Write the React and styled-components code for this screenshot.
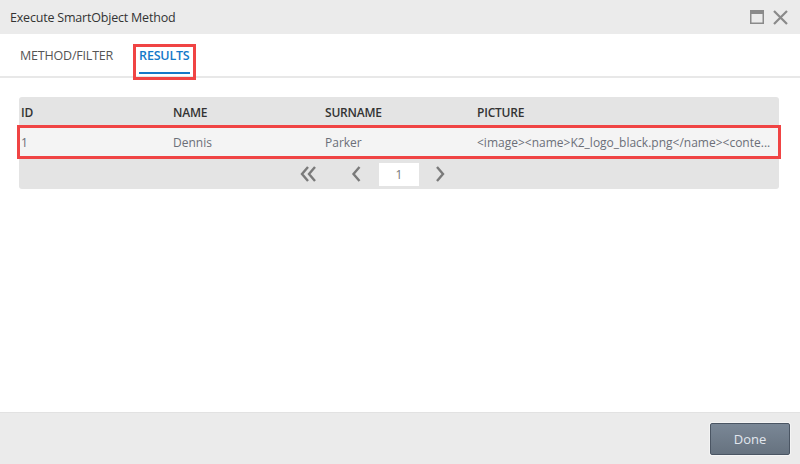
import React from 'react'
import styled, { createGlobalStyle } from 'styled-components'

const Global = createGlobalStyle`
  html, body { margin: 0; padding: 0; background: #fff; }
  body { font-family: "Open Sans", "Liberation Sans", sans-serif; }
  #root { width: 800px; height: 464px; }
`

const Dialog = styled.div`
  width: 800px;
  height: 464px;
  display: flex;
  flex-direction: column;
  background: #fff;
  overflow: hidden;
`

const TitleBar = styled.div`
  height: 34px;
  flex: none;
  background: #ebebeb;
  display: flex;
  align-items: center;
  justify-content: space-between;
  padding: 0 12px 0 10px;
`

const Title = styled.div`
  font-size: 12.5px;
  color: #333;
  letter-spacing: -0.2px;
`

const WinButtons = styled.div`
  display: flex;
  align-items: center;
  gap: 9px;
  color: #8a8a8a;
`

const Tabs = styled.div`
  height: 42px;
  flex: none;
  display: flex;
  align-items: flex-start;
  padding-left: 20px;
  gap: 26px;
  border-bottom: 2px solid #e8e8e8;
`

const Tab = styled.div`
  height: 24px;
  margin-top: 16px;
  line-height: 11px;
  font-size: 12.5px;
  letter-spacing: -0.2px;
  color: ${p => (p.$active ? '#1479c9' : '#555')};
  font-weight: ${p => (p.$active ? 600 : 400)};
  box-shadow: ${p => (p.$active ? 'inset 0 -2px 0 #1479c9' : 'none')};
  outline: ${p => (p.$highlight ? '3px solid #f04444' : 'none')};
  outline-offset: 3px;
`

const Body = styled.div`
  flex: 1;
  padding: 19px 20px 0 19px;
`

const Grid = styled.div`
  width: 760px;
  border-radius: 3px;
  background: #e4e4e4;
`

const Row = styled.div`
  display: grid;
  grid-template-columns: 152px 152px 152px 1fr;
  height: 30px;
  align-items: center;
  background: ${p => (p.$head ? 'transparent' : '#f4f4f4')};
  outline: ${p => (p.$highlight ? '3px solid #f04444' : 'none')};
  outline-offset: ${p => (p.$highlight ? '-1px' : '0')};
  position: relative;
  margin-bottom: ${p => (p.$highlight ? '2px' : '0')};
`

const Cell = styled.div`
  padding-left: 2px;
  font-size: 12px;
  color: ${p => (p.$head ? '#333' : '#6b6f78')};
  font-weight: ${p => (p.$head ? 600 : 400)};
  letter-spacing: ${p => (p.$head ? '-0.2px' : '0')};
  white-space: nowrap;
`

const Pager = styled.div`
  height: 30px;
  display: flex;
  align-items: center;
  padding-left: 279px;
  color: #7a7a7a;
`

const PagerBtn = styled.div`
  display: flex;
  align-items: center;
  justify-content: center;
  width: 20px;
  margin-left: ${p => p.$ml || 0}px;
`

const PageBox = styled.div`
  width: 40px;
  height: 23px;
  margin-left: 13px;
  background: #fff;
  display: flex;
  align-items: center;
  justify-content: center;
  font-size: 12px;
  color: #777;
`

const Footer = styled.div`
  height: 51px;
  flex: none;
  background: #ebebeb;
  border-top: 1px solid #e2e2e2;
  display: flex;
  align-items: center;
  justify-content: flex-end;
  padding-right: 10px;
`

const DoneButton = styled.button`
  width: 80px;
  height: 32px;
  border: 1px solid #4a5563;
  border-radius: 2px;
  background: linear-gradient(#7a8796, #66727f);
  box-shadow: 0 0 0 1px #f4f4f4;
  color: #e2e7ee;
  font-family: "Open Sans", "Liberation Sans", sans-serif;
  font-size: 13px;
`

const Chevron = ({ d }) => (
  <svg width="18" height="18" viewBox="0 0 18 18" fill="none" stroke="currentColor" strokeWidth="2.4">
    <path d={d} />
  </svg>
)

export default function App() {
  return (
    <>
      <Global />
      <Dialog>
        <TitleBar>
          <Title>Execute SmartObject Method</Title>
          <WinButtons>
            <svg width="14" height="14" viewBox="0 0 14 14" fill="none" stroke="#8a8a8a">
              <rect x="0.75" y="0.75" width="12.5" height="12.5" strokeWidth="1.5" />
              <rect x="0.75" y="0.75" width="12.5" height="2.5" fill="#8a8a8a" strokeWidth="1.5" />
            </svg>
            <svg width="15" height="15" viewBox="0 0 15 15" stroke="#8a8a8a" strokeWidth="2.2">
              <path d="M1 1 L14 14 M14 1 L1 14" />
            </svg>
          </WinButtons>
        </TitleBar>
        <Tabs>
          <Tab>METHOD/FILTER</Tab>
          <Tab $active $highlight>RESULTS</Tab>
        </Tabs>
        <Body>
          <Grid>
            <Row $head>
              <Cell $head>ID</Cell>
              <Cell $head>NAME</Cell>
              <Cell $head>SURNAME</Cell>
              <Cell $head>PICTURE</Cell>
            </Row>
            <Row $highlight>
              <Cell>1</Cell>
              <Cell>Dennis</Cell>
              <Cell>Parker</Cell>
              <Cell>&lt;image&gt;&lt;name&gt;K2_logo_black.png&lt;/name&gt;&lt;conte...</Cell>
            </Row>
            <Pager>
              <PagerBtn>
                <Chevron d="M9 2 L3 9 L9 16 M16 2 L10 9 L16 16" />
              </PagerBtn>
              <PagerBtn $ml={28}>
                <Chevron d="M12.5 2 L6.5 9 L12.5 16" />
              </PagerBtn>
              <PageBox>1</PageBox>
              <PagerBtn $ml={11}>
                <Chevron d="M6 2 L12 9 L6 16" />
              </PagerBtn>
            </Pager>
          </Grid>
        </Body>
        <Footer>
          <DoneButton>Done</DoneButton>
        </Footer>
      </Dialog>
    </>
  )
}
